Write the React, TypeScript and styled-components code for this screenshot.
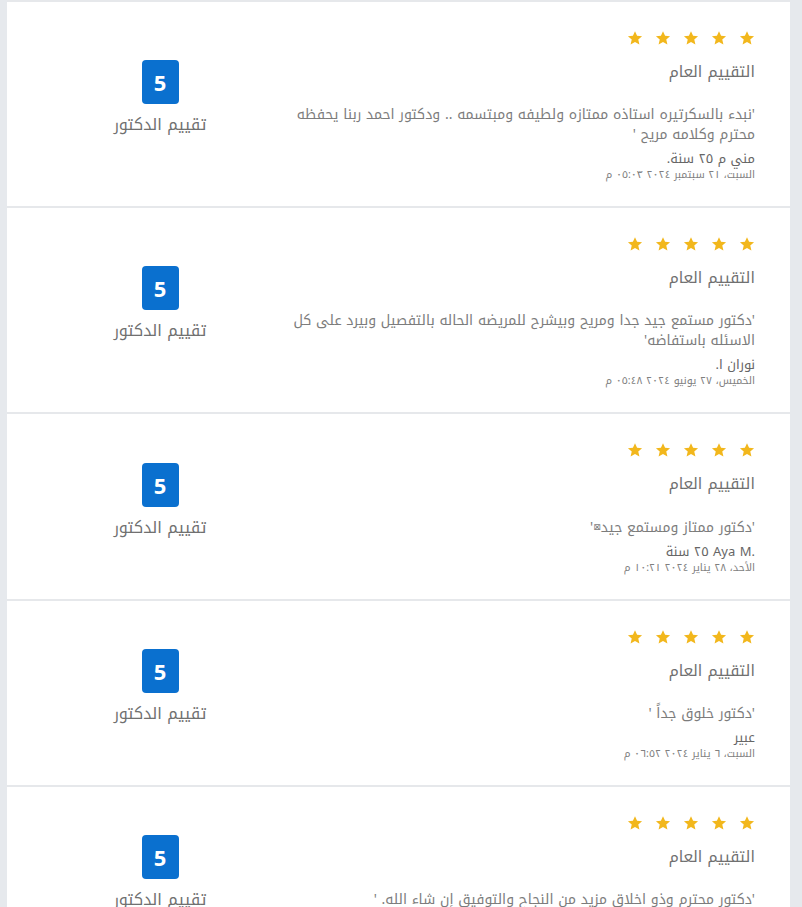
import React from "react";
import styled, { createGlobalStyle } from "styled-components";

const GlobalStyle = createGlobalStyle`
  html, body {
    margin: 0;
    padding: 0;
    background: #e6e9ed;
    font-family: "Noto Kufi Arabic", "Noto Sans Arabic", "Noto Sans", "DejaVu Sans", sans-serif;
  }
`;

const Panel = styled.div`
  margin: 0 12px 0 7px;
  background: #ffffff;
  direction: rtl;
`;

const Card = styled.div`
  display: flex;
  align-items: stretch;
  border-top: 2px solid #e6e8eb;
  padding: 0 35px 0 23px;
`;

const Details = styled.div`
  flex: 1;
  padding: 28px 0 24px;
  text-align: right;
`;

const Stars = styled.div`
  display: flex;
  gap: 12px;
  margin-bottom: 16px;
`;

const Title = styled.div`
  font-size: 15.5px;
  color: #707070;
  line-height: 20px;
  margin-bottom: 23px;
`;

const Comment = styled.p`
  margin: 0 0 5px;
  font-size: 14px;
  line-height: 20px;
  color: #7c7c7c;
`;

const Name = styled.div`
  font-size: 13px;
  color: #666666;
  line-height: 18px;
`;

const DateLine = styled.div`
  font-size: 10.5px;
  color: #808080;
  line-height: 14px;
`;

const RatingCol = styled.div`
  width: 260px;
  display: flex;
  flex-direction: column;
  align-items: center;
  justify-content: center;
  padding-bottom: 12px;
`;

const ScoreBox = styled.div`
  width: 37px;
  height: 44px;
  border-radius: 4px;
  background: #0a70cf;
  color: #ffffff;
  display: flex;
  align-items: center;
  justify-content: center;
  font-family: "Open Sans", sans-serif;
  font-weight: 700;
  font-size: 22px;
  margin-bottom: 10px;
`;

const ScoreLabel = styled.div`
  font-size: 16px;
  line-height: 22px;
  color: #707070;
`;

const Tofu = styled.span`
  font-size: 9px;
  vertical-align: 2px;
`;

const StarIcon = () => (
  <svg width="16" height="16" viewBox="0 0 24 24">
    <path
      fill="#f2b71c"
      d="M12 1.8l3.1 6.9 7.5.7-5.7 5 1.7 7.4L12 17.9l-6.6 3.9 1.7-7.4-5.7-5 7.5-.7z"
    />
  </svg>
);

type Review = {
  comment: React.ReactNode;
  name: React.ReactNode;
  date: string;
};

const reviews: Review[] = [
  {
    comment:
      "'نبدء بالسكرتيره استاذه ممتازه ولطيفه ومبتسمه .. ودكتور احمد ربنا يحفظه محترم وكلامه مريح '",
    name: "مني م ٢٥ سنة.",
    date: "السبت، ٢١ سبتمبر ٢٠٢٤ ٠٥:٠٣ م",
  },
  {
    comment:
      "'دكتور مستمع جيد جدا ومريح وبيشرح للمريضه الحاله بالتفصيل وبيرد على كل الاسئله باستفاضه'",
    name: "نوران ا.",
    date: "الخميس، ٢٧ يونيو ٢٠٢٤ ٠٥:٤٨ م",
  },
  {
    comment: (
      <>
        'دكتور ممتاز ومستمع جيد<Tofu>⊠</Tofu>'
      </>
    ),
    name: (
      <>
        <bdi>Aya M.</bdi> ٢٥ سنة
      </>
    ),
    date: "الأحد، ٢٨ يناير ٢٠٢٤ ١٠:٢١ م",
  },
  {
    comment: "'دكتور خلوق جداً '",
    name: "عبير",
    date: "السبت، ٦ يناير ٢٠٢٤ ٠٦:٥٢ م",
  },
  {
    comment: "'دكتور محترم وذو اخلاق مزيد من النجاح والتوفيق إن شاء الله. '",
    name: "سارة",
    date: "الجمعة، ٥ يناير ٢٠٢٤ ٠٨:١٥ م",
  },
];

const App: React.FC = () => (
  <>
    <GlobalStyle />
    <Panel>
      {reviews.map((r, i) => (
        <Card key={i}>
          <Details>
            <Stars>
              {[0, 1, 2, 3, 4].map((s) => (
                <StarIcon key={s} />
              ))}
            </Stars>
            <Title>التقييم العام</Title>
            <Comment>{r.comment}</Comment>
            <Name>{r.name}</Name>
            <DateLine>{r.date}</DateLine>
          </Details>
          <RatingCol>
            <ScoreBox>5</ScoreBox>
            <ScoreLabel>تقييم الدكتور</ScoreLabel>
          </RatingCol>
        </Card>
      ))}
    </Panel>
  </>
);

export default App;
